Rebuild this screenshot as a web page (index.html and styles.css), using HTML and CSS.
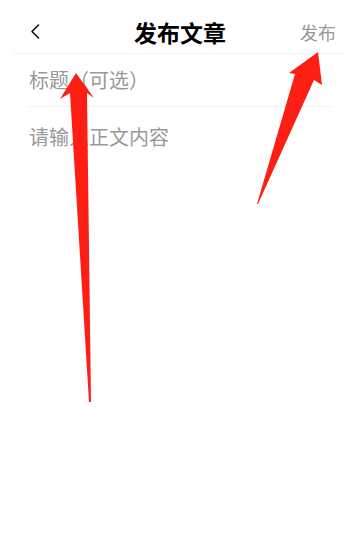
FILE: index.html
```html
<!DOCTYPE html>
<html lang="zh-CN">
<head>
<meta charset="utf-8">
<title>发布文章</title>
<link rel="stylesheet" href="styles.css">
</head>
<body>
<div class="page">
  <header class="nav">
    <div class="nav-left">
      <svg class="back" width="10" height="15" viewBox="0 0 10 15"><path d="M8.5 1 L2 7.5 L8.5 14" fill="none" stroke="#111" stroke-width="1.6" stroke-linecap="round" stroke-linejoin="round"/></svg>
    </div>
    <h1 class="nav-title">发布文章</h1>
    <div class="nav-right"><span class="publish">发布</span></div>
  </header>
  <div class="field title-field">
    <div class="placeholder">标题（可选）</div>
  </div>
  <div class="field body-field">
    <div class="placeholder">请输入正文内容</div>
  </div>
  <svg class="annotations" width="355" height="550" viewBox="0 0 355 550">
    <polygon points="76,73 94,98 87,93 91,402 89,402 70,93 60,99" fill="#fe1f14"/>
    <polygon points="318,52 322,85 314,80 258,204 257,204 295,74 289,73" fill="#fe1f14"/>
  </svg>
</div>
</body>
</html>
```

FILE: styles.css
```css
* { box-sizing: border-box; }
html, body {
  margin: 0;
  padding: 0;
  background: #fff;
}
body {
  font-family: "Noto Sans CJK SC", "Noto Sans", sans-serif;
  width: 355px;
  height: 550px;
  overflow: hidden;
}
.page {
  position: relative;
  width: 355px;
  height: 550px;
}
.nav {
  display: grid;
  grid-template-columns: 1fr auto 1fr;
  align-items: center;
  height: 54px;
  padding: 10px 11px 0 17px;
  margin: 0 8px 0 13px;
  border-bottom: 1px solid #f2f2f2;
}
.nav-left {
  display: flex;
  align-items: center;
}
.back { display: block; }
.nav-title {
  margin: 0 0 0 -6px;
  font-size: 23px;
  font-weight: 700;
  color: #000;
  line-height: 30px;
}
.nav-right {
  display: flex;
  justify-content: flex-end;
}
.publish {
  font-size: 18px;
  color: #999;
  line-height: 24px;
}
.field {
  font-size: 20px;
  color: #999;
}
.title-field {
  margin: 0 23px 0 28px;
  padding: 1px 0 0 1px;
  height: 53px;
  line-height: 50px;
  border-bottom: 1px solid #f2f2f2;
}
.body-field {
  padding: 16px 0 0 29px;
  line-height: 28px;
}
.placeholder { white-space: nowrap; }
.annotations {
  position: absolute;
  left: 0;
  top: 0;
  pointer-events: none;
}
```
